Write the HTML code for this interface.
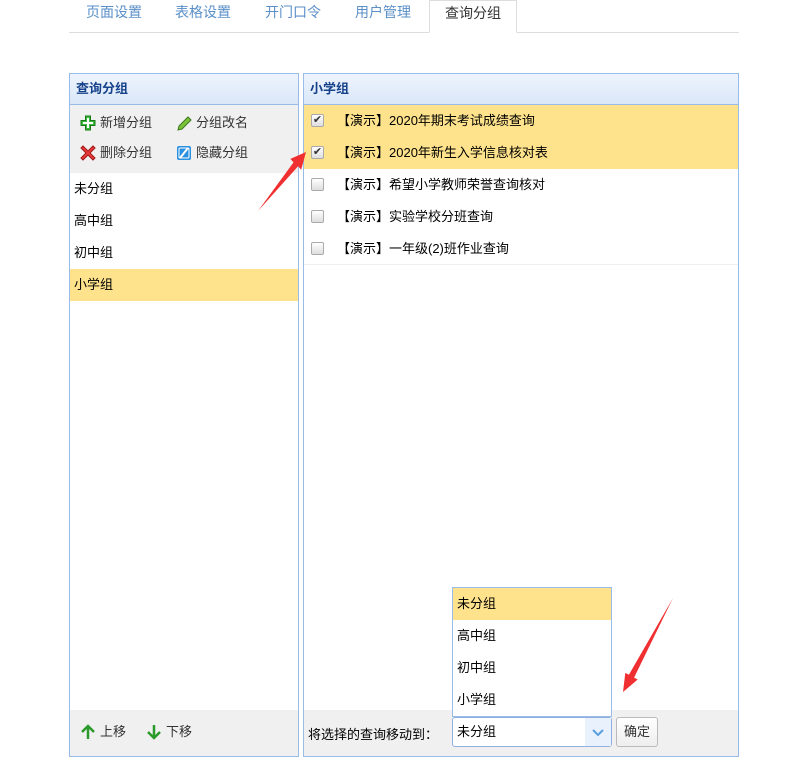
<!DOCTYPE html>
<html><head><meta charset="utf-8"><style>
*{box-sizing:border-box;margin:0;padding:0}
body{width:803px;height:776px;background:#fff;font-family:"Liberation Sans","Noto Sans CJK SC",sans-serif;font-size:13px;color:#000;position:relative;overflow:hidden}
.abs{position:absolute}
.tabs{left:69px;top:0;width:670px;height:33px;border-bottom:1px solid #ddd}
.tab{position:absolute;top:0;height:33px;line-height:25px;color:#5a8fc8;font-size:14px}
.tab.act{background:#fff;border:1px solid #ddd;border-bottom:1px solid #fff;color:#333;text-align:center}
.panel{border:1px solid #99bbe8;background:#fff}
.hd{height:31px;background:linear-gradient(#eef4fd,#dae7f8);border-bottom:1px solid #99bbe8;font-weight:bold;color:#15428b;line-height:30px;padding-left:6px;font-size:13px}
.tb{background:#f0f0f0}
.item{height:32px;line-height:32px;padding-left:4px}
.sel{background:#fee28c}
.row{height:32px;line-height:32px;position:relative;padding-left:33px}
.cb{position:absolute;left:7px;top:9px;width:13px;height:13px;border:1px solid #aaa;border-radius:2px;background:linear-gradient(#fff,#ddd);font-size:11px;line-height:11px;text-align:center;color:#333}
.foot{background:#f0f0f0}
.ic{position:absolute;top:1px;left:0}
.lbl{position:absolute;color:#333;padding-left:20px;height:18px;line-height:18px}
</style></head><body>
<div class="abs tabs">
<div class="tab" style="left:17px">页面设置</div>
<div class="tab" style="left:106px">表格设置</div>
<div class="tab" style="left:196px">开门口令</div>
<div class="tab" style="left:286px">用户管理</div>
<div class="tab act" style="left:360px;width:88px">查询分组</div>
</div>

<div class="abs panel" style="left:69px;top:73px;width:230px;height:684px">
<div class="hd">查询分组</div>
<div class="tb" style="height:68px;position:relative">
<div class="lbl" style="left:10px;top:9px"><svg class="ic" width="16" height="16"><path d="M5.5 1h5v4.5h4.5v5h-4.5v4.5h-5v-4.5h-4.5v-5h4.5z" fill="#3cb83c" stroke="#1a7a1a"/><path d="M7 3h2v4h4v2h-4v4h-2v-4h-4v-2h4z" fill="#fff"/></svg>新增分组</div>
<div class="lbl" style="left:106px;top:9px"><svg class="ic" width="16" height="16"><path d="M2 15l1-4 9-9 3 3-9 9z" fill="#7cc23a" stroke="#3a7a1a"/></svg>分组改名</div>
<div class="lbl" style="left:10px;top:39px"><svg class="ic" width="16" height="16"><path d="M3 1l5 5 5-5 2 2-5 5 5 5-2 2-5-5-5 5-2-2 5-5-5-5z" fill="#e83a3a" stroke="#a01818"/></svg>删除分组</div>
<div class="lbl" style="left:106px;top:39px"><svg class="ic" width="16" height="16"><rect x="1" y="1" width="14" height="14" rx="2" fill="#2a90e0"/><path d="M4 13L12 3" stroke="#fff" stroke-width="2"/><rect x="3" y="3" width="10" height="10" rx="1" fill="none" stroke="#fff"/></svg>隐藏分组</div>
</div>
<div class="item">未分组</div>
<div class="item">高中组</div>
<div class="item">初中组</div>
<div class="item sel">小学组</div>
<div class="abs foot" style="left:0;top:636px;width:228px;height:46px">
<div class="lbl" style="left:10px;top:13px"><svg class="ic" width="16" height="16"><path d="M8 15V3M2 8l6-6 6 6" fill="none" stroke="#2a9a2a" stroke-width="2.5"/></svg>上移</div>
<div class="lbl" style="left:76px;top:13px"><svg class="ic" width="16" height="16"><path d="M8 1v12M2 8l6 6 6-6" fill="none" stroke="#2a9a2a" stroke-width="2.5"/></svg>下移</div>
</div>
</div>

<div class="abs panel" style="left:303px;top:73px;width:436px;height:684px">
<div class="hd">小学组</div>
<div class="row sel"><span class="cb">✔</span>【演示】2020年期末考试成绩查询</div>
<div class="row sel"><span class="cb">✔</span>【演示】2020年新生入学信息核对表</div>
<div class="row"><span class="cb"></span>【演示】希望小学教师荣誉查询核对</div>
<div class="row"><span class="cb"></span>【演示】实验学校分班查询</div>
<div class="row" style="border-bottom:1px solid #eee"><span class="cb"></span>【演示】一年级(2)班作业查询</div>
<div class="abs foot" style="left:0;top:636px;width:434px;height:46px">
<div class="abs" style="left:4px;top:14px">将选择的查询移动到：</div>
</div>
</div>

<div class="abs" style="left:452px;top:587px;width:160px;height:130px;border:1px solid #99bbe8;background:#fff">
<div class="item sel">未分组</div>
<div class="item">高中组</div>
<div class="item">初中组</div>
<div class="item">小学组</div>
</div>
<div class="abs" style="left:452px;top:717px;width:160px;height:30px;border:1px solid #8fb0e0;border-radius:3px;background:#fff;line-height:28px;padding-left:4px">未分组
<div class="abs" style="right:0;top:0;width:26px;height:28px;background:#e8f1fc"><svg width="26" height="28"><path d="M8 12l5 5 5-5" fill="none" stroke="#5a9ee0" stroke-width="2"/></svg></div></div>
<div class="abs" style="left:616px;top:717px;width:42px;height:30px;border:1px solid #bbb;border-radius:3px;background:linear-gradient(#fff,#eee);line-height:28px;text-align:center;color:#333">确定</div>

<svg class="abs" style="left:0;top:0" width="803" height="776">
<polygon points="258,211 293.5,162.4 290.4,158.9 306,152 301.2,169.7 298.1,166.2" fill="#f03030"/>
<polygon points="673,598 634.1,677.6 637.7,679.5 623,692 625.3,672.9 628.9,674.8" fill="#f03030"/>
</svg>
</body></html>
